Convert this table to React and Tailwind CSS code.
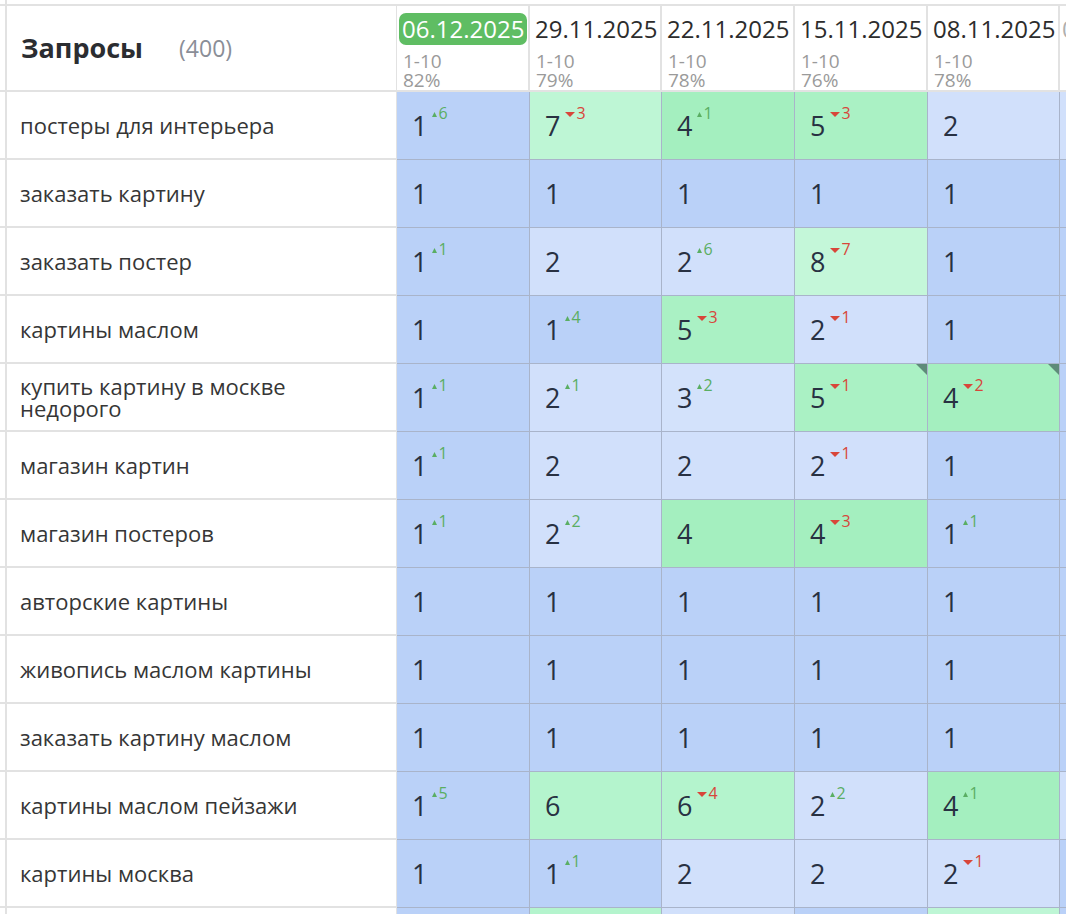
import React from "react";

const dates = [
  { d: "06.12.2025", range: "1-10", pct: "82%", active: true, w: "w-[133px]" },
  { d: "29.11.2025", range: "1-10", pct: "79%", w: "w-[132px]" },
  { d: "22.11.2025", range: "1-10", pct: "78%", w: "w-[133px]" },
  { d: "15.11.2025", range: "1-10", pct: "76%", w: "w-[133px]" },
  { d: "08.11.2025", range: "1-10", pct: "78%", w: "w-[132px]" },
];

const widths = ["w-[133px]", "w-[132px]", "w-[133px]", "w-[133px]", "w-[132px]"];

const bg = {
  1: "bg-[#bad1f8]",
  2: "bg-[#d1e0fb]",
  3: "bg-[#d3e2fb]",
  4: "bg-[#a4efbf]",
  5: "bg-[#aaf1c4]",
  6: "bg-[#b4f4cd]",
  7: "bg-[#bef6d5]",
  8: "bg-[#c4f7d9]",
};

// [value, change, corner]
const rows = [
  ["постеры для интерьера", [[1, 6], [7, -3], [4, 1], [5, -3], [2]], 2],
  ["заказать картину", [[1], [1], [1], [1], [1]], 1],
  ["заказать постер", [[1, 1], [2], [2, 6], [8, -7], [1]], 1],
  ["картины маслом", [[1], [1, 4], [5, -3], [2, -1], [1]], 1],
  ["купить картину в москве недорого", [[1, 1], [2, 1], [3, 2], [5, -1, true], [4, -2, true]], 1],
  ["магазин картин", [[1, 1], [2], [2], [2, -1], [1]], 1],
  ["магазин постеров", [[1, 1], [2, 2], [4], [4, -3], [1, 1]], 1],
  ["авторские картины", [[1], [1], [1], [1], [1]], 1],
  ["живопись маслом картины", [[1], [1], [1], [1], [1]], 1],
  ["заказать картину маслом", [[1], [1], [1], [1], [1]], 1],
  ["картины маслом пейзажи", [[1, 5], [6], [6, -4], [2, 2], [4, 1]], 2],
  ["картины москва", [[1], [1, 1], [2], [2], [2, -1]], 1],
  ["", [[1], [6], [2], [1], [7]], 1],
];

function Change({ n }) {
  if (!n) return null;
  const up = n > 0;
  return (
    <span
      className={`ml-[5px] -mt-[7px] flex items-center gap-[1px] text-[16px] leading-none ${
        up ? "text-[#5aae63]" : "text-[#d8463a]"
      }`}
    >
      {up ? (
        <svg width="5" height="5" viewBox="0 0 5 5" className="mt-[3px]">
          <polygon points="2.5,0 5,5 0,5" fill="#5aae63" />
        </svg>
      ) : (
        <svg width="10" height="5" viewBox="0 0 10 5" className="mt-[2px]">
          <polygon points="0,0 10,0 5,5" fill="#d8463a" />
        </svg>
      )}
      <span>{Math.abs(n)}</span>
    </span>
  );
}

function Cell({ v, ch, corner, w }) {
  return (
    <div
      className={`relative ${w} shrink-0 h-full flex items-center pl-[15px] border-r border-b border-[#a9b4ca] ${bg[v]}`}
    >
      <div className="flex items-start">
        <span className="text-[27px] leading-none text-[#283142]">{v}</span>
        <Change n={ch} />
      </div>
      {corner && (
        <svg width="11" height="11" viewBox="0 0 11 11" className="absolute top-0 right-0">
          <polygon points="0,0 11,0 11,11" fill="#5e8b79" />
        </svg>
      )}
    </div>
  );
}

export default function App() {
  return (
    <div className="w-[1066px] h-[914px] overflow-hidden bg-white font-['Open_Sans',sans-serif] flex flex-col">
      <div className="h-[4px] shrink-0 flex">
        <div className="w-[7px] border-r-2 border-[#e2e2e2]" />
      </div>

      {/* header */}
      <div className="h-[88px] shrink-0 flex border-t-2 border-[#e2e2e2]">
        <div className="w-[7px] shrink-0 border-r-2 border-b-2 border-[#e2e2e2]" />
        <div className="w-[390px] shrink-0 flex items-center pl-[14px] border-r border-b-2 border-[#e2e2e2]">
          <span className="text-[27px] font-bold text-[#2b2d31]">Запросы</span>
          <span className="ml-[36px] text-[23px] text-[#8a8e97]">(400)</span>
        </div>
        {dates.map((d) => (
          <div
            key={d.d}
            className={`${d.w} shrink-0 pl-[2px] pt-[7px] border-r-2 border-b-2 border-[#e2e2e2]`}
          >
            <span
              className={`inline-block whitespace-nowrap px-[3px] rounded-[7px] text-[24px] leading-[32px] ${
                d.active ? "bg-[#5fbd63] text-white" : "text-[#2c2c2c]"
              }`}
            >
              {d.d}
            </span>
            <div className="mt-[7px] pl-[4px] text-[19px] leading-[19px] text-[#9a9a9a]">
              <div>{d.range}</div>
              <div>{d.pct}</div>
            </div>
          </div>
        ))}
        <div className="flex-1 pt-[7px] border-b-2 border-[#e2e2e2] overflow-hidden">
          <span className="whitespace-nowrap pl-[2px] text-[24px] leading-[32px] text-[#b0b0b0]">
            01.11.2025
          </span>
        </div>
      </div>

      {/* body */}
      {rows.map(([label, cells, extra], i) => (
        <div key={i} className="h-[68px] shrink-0 flex">
          <div className="w-[7px] shrink-0 border-r-2 border-b-2 border-[#e2e2e2]" />
          <div className="w-[390px] shrink-0 flex items-center pl-[13px] border-r border-b-2 border-[#e2e2e2]">
            <span className="max-w-[330px] text-[22px] leading-[22px] text-[#363636]">{label}</span>
          </div>
          {cells.map(([v, ch, corner], j) => (
            <Cell key={j} v={v} ch={ch} corner={corner} w={widths[j]} />
          ))}
          <div className={`flex-1 border-b border-[#a9b4ca] ${bg[extra]}`} />
        </div>
      ))}
    </div>
  );
}
